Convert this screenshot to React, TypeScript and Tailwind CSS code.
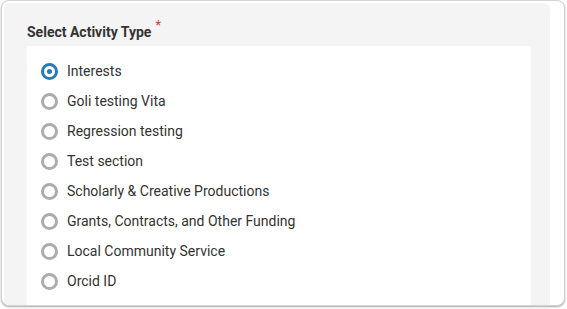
const options = [
  "Interests",
  "Goli testing Vita",
  "Regression testing",
  "Test section",
  "Scholarly & Creative Productions",
  "Grants, Contracts, and Other Funding",
  "Local Community Service",
  "Orcid ID",
];

const App = () => {
  const selected = 0;

  return (
    <div className="w-[567px] h-[309px] bg-white font-['Roboto',sans-serif]">
      <div className="ml-[1px] w-[564px] h-[306px] rounded-[8px] border border-[#d4d4d4] bg-white shadow-[0_1px_2px_rgba(0,0,0,0.35)] overflow-hidden flex pt-[2px] pl-[2px] pr-[14px]">
        <div className="flex-1 bg-[#f4f4f4] rounded-tl-[6px] rounded-tr-[6px] pl-[23px] pr-[19px] pt-[20px] flex flex-col">
          {/* TITLE */}
          <div className="flex items-start h-[23px]">
            <h2 className="text-[14px] font-bold text-[#333] leading-[18px]">Select Activity Type</h2>
            <span className="text-[#e0474c] text-[12px] font-bold leading-none ml-[4px] -mt-[4px]">*</span>
          </div>
          {/* LIST */}
          <div className="flex-1 bg-white pt-[10px] pl-[14px] flex flex-col">
            {options.map((label, i) => (
              <label key={label} className="flex items-center h-[30px] cursor-pointer">
                {i === selected ? (
                  <span className="w-[17px] h-[17px] rounded-full border-[3px] border-[#2b7ab1] flex items-center justify-center">
                    <span className="w-[5px] h-[5px] rounded-full bg-[#2b7ab1]" />
                  </span>
                ) : (
                  <span className="w-[17px] h-[17px] rounded-full border-[3px] border-[#acacac] bg-white" />
                )}
                <span className="ml-[9px] text-[14px] text-[#333]">{label}</span>
              </label>
            ))}
          </div>
        </div>
      </div>
    </div>
  );
};

export default App;
